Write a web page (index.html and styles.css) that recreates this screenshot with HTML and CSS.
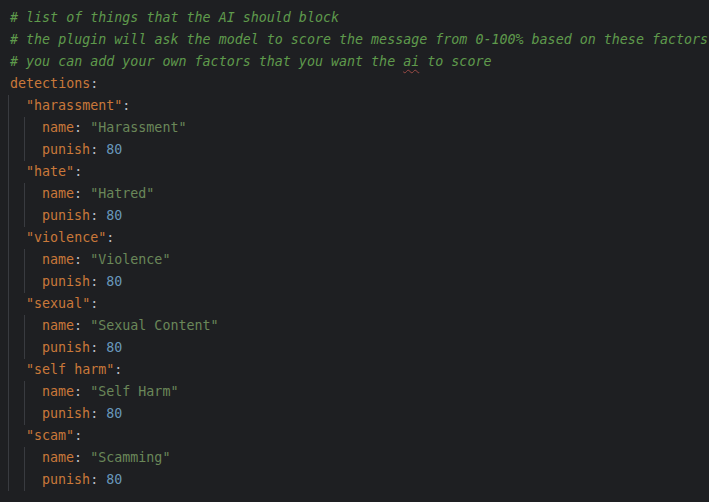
FILE: index.html
```html
<!DOCTYPE html>
<html>
<head>
<meta charset="utf-8">
<link rel="stylesheet" href="styles.css">
</head>
<body>
<div class="editor">
  <div class="line comment"># list of things that the AI should block</div>
  <div class="line comment"># the plugin will ask the model to score the message from 0-100% based on these factors</div>
  <div class="line comment"># you can add your own factors that you want the <span class="typo">ai</span> to score</div>
  <div class="line"><span class="key">detections</span><span class="punc">:</span></div>
  <div class="block">
    <div class="line"><span class="key">"harassment"</span><span class="punc">:</span></div>
    <div class="block">
      <div class="line"><span class="key">name</span><span class="punc">:</span> <span class="str">"Harassment"</span></div>
      <div class="line"><span class="key">punish</span><span class="punc">:</span> <span class="num">80</span></div>
    </div>
    <div class="line"><span class="key">"hate"</span><span class="punc">:</span></div>
    <div class="block">
      <div class="line"><span class="key">name</span><span class="punc">:</span> <span class="str">"Hatred"</span></div>
      <div class="line"><span class="key">punish</span><span class="punc">:</span> <span class="num">80</span></div>
    </div>
    <div class="line"><span class="key">"violence"</span><span class="punc">:</span></div>
    <div class="block">
      <div class="line"><span class="key">name</span><span class="punc">:</span> <span class="str">"Violence"</span></div>
      <div class="line"><span class="key">punish</span><span class="punc">:</span> <span class="num">80</span></div>
    </div>
    <div class="line"><span class="key">"sexual"</span><span class="punc">:</span></div>
    <div class="block">
      <div class="line"><span class="key">name</span><span class="punc">:</span> <span class="str">"Sexual Content"</span></div>
      <div class="line"><span class="key">punish</span><span class="punc">:</span> <span class="num">80</span></div>
    </div>
    <div class="line"><span class="key">"self harm"</span><span class="punc">:</span></div>
    <div class="block">
      <div class="line"><span class="key">name</span><span class="punc">:</span> <span class="str">"Self Harm"</span></div>
      <div class="line"><span class="key">punish</span><span class="punc">:</span> <span class="num">80</span></div>
    </div>
    <div class="line"><span class="key">"scam"</span><span class="punc">:</span></div>
    <div class="block">
      <div class="line"><span class="key">name</span><span class="punc">:</span> <span class="str">"Scamming"</span></div>
      <div class="line"><span class="key">punish</span><span class="punc">:</span> <span class="num">80</span></div>
    </div>
  </div>
</div>
</body>
</html>
```
FILE: styles.css
```css
html, body {
  margin: 0;
  padding: 0;
  background: #1e1f22;
}
.editor {
  padding: 7px 0 0 10px;
  height: 502px;
  box-sizing: border-box;
  font-family: "DejaVu Sans Mono", "Liberation Mono", monospace;
  font-size: 13.33px;
  color: #bcbec4;
}
.line {
  height: 22px;
  line-height: 22px;
  white-space: pre;
}
.block {
  margin-left: -2px;
  border-left: 1px solid #393b40;
  padding-left: 17px;
}
.comment {
  color: #5f9a4c;
  font-style: italic;
}
.typo {
  text-decoration: underline wavy #9b4a45;
  text-decoration-thickness: 1px;
  text-underline-offset: 3px;
}
.key {
  color: #c9783a;
}
.punc {
  color: #bcbec4;
}
.str {
  color: #6a8759;
}
.num {
  color: #6897bb;
}
```
